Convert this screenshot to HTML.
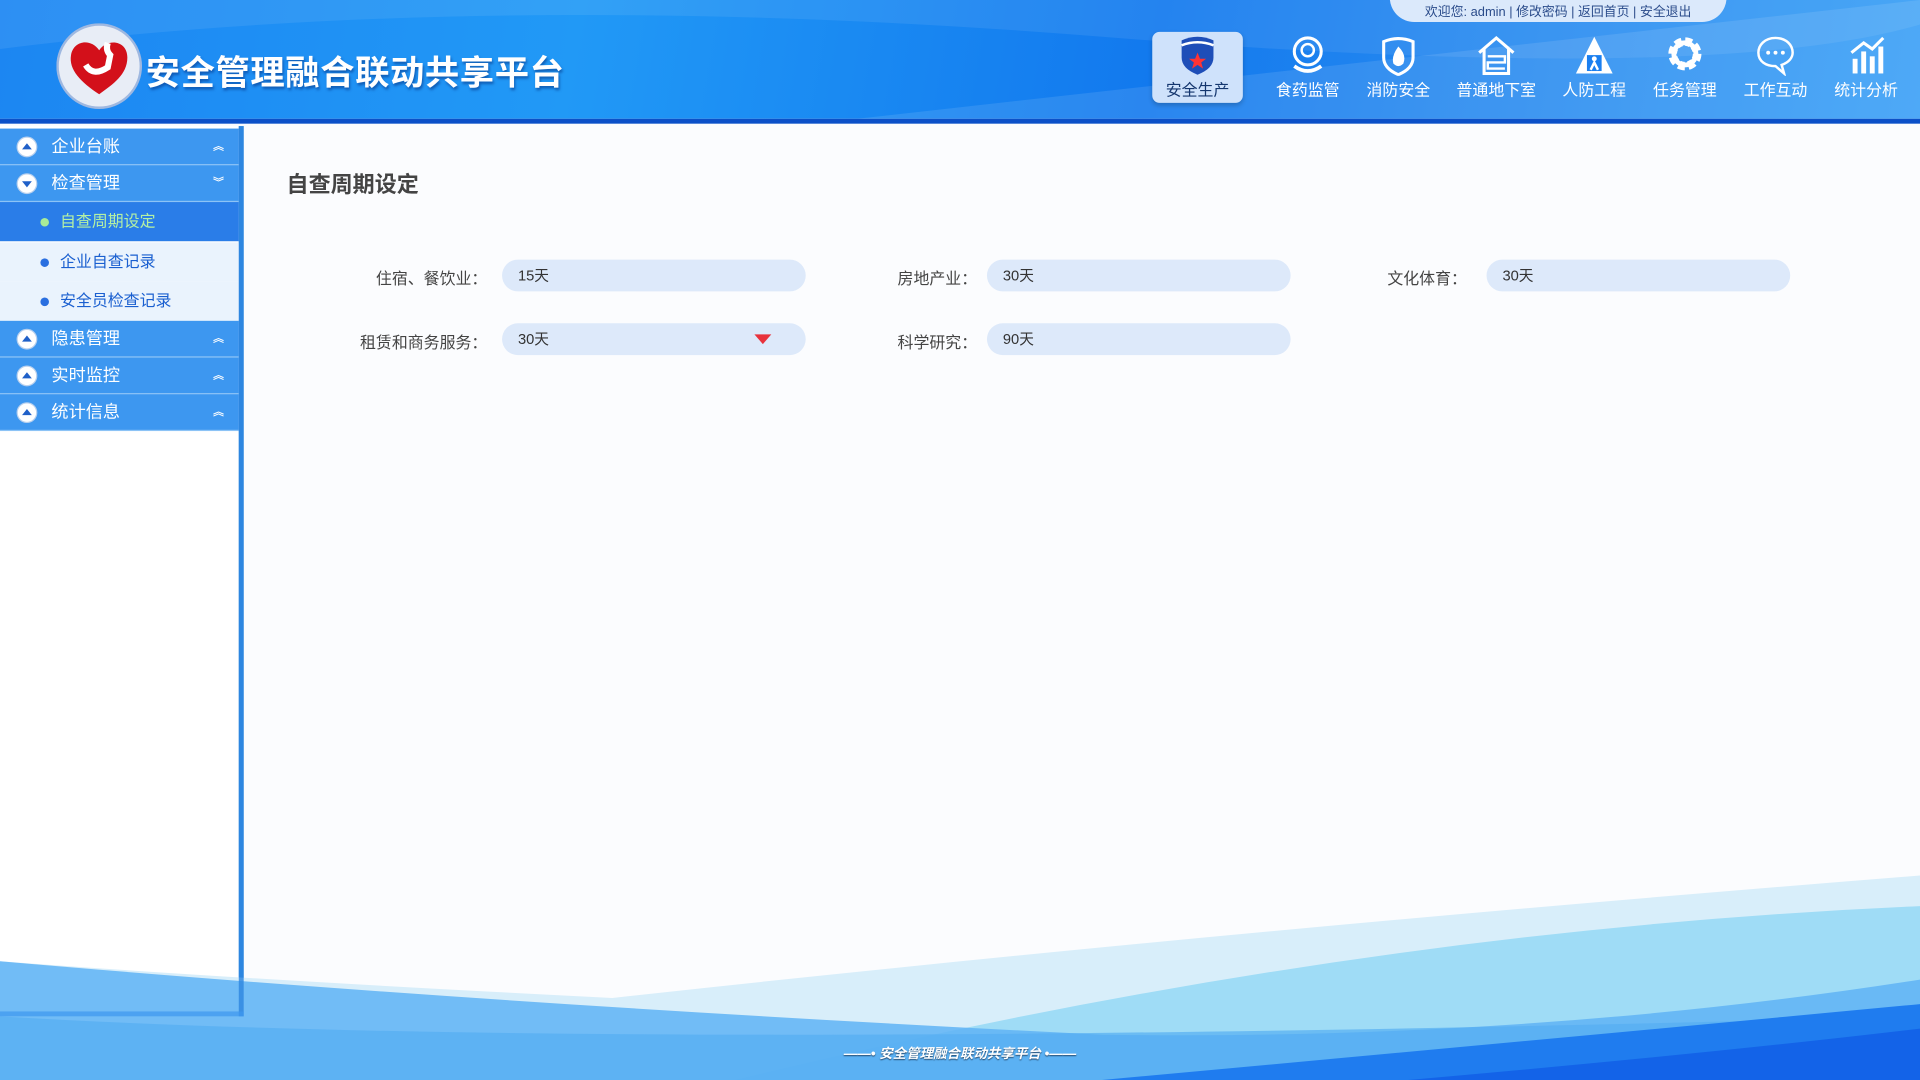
<!DOCTYPE html>
<html><head><meta charset="utf-8"><style>
html,body{margin:0;padding:0;width:1920px;height:1080px;overflow:hidden;background:#fff}
#w{position:absolute;left:0;top:0;width:1568px;height:882px;transform:scale(1.22449);transform-origin:0 0;overflow:hidden;font-family:"Liberation Sans","Noto Sans CJK SC",sans-serif;background:#fbfcfe}
.hdr{position:absolute;left:0;top:0;width:1568px;height:97px;background:linear-gradient(100deg,#1c86f2 0%,#2199f6 30%,#1279ee 60%,#2a8cf0 80%,#3aa0f6 100%);border-bottom:4px solid #0b50c8;overflow:hidden}
.title{position:absolute;left:119px;top:38px;color:#fff;font-size:28px;font-weight:bold;letter-spacing:0.5px;text-shadow:1px 2px 2px rgba(0,40,120,.5)}
.tab{position:absolute;left:1135px;top:-2px;width:275px;height:20px;background:#dbe9fb;border-radius:0 0 40px 40px;font-size:10.5px;color:#2a4b8a;text-align:center;line-height:24px}
.nav{position:absolute;top:26px;width:74px;height:58px;text-align:center;color:#fff;font-size:13px}
.nav svg{display:block;margin:2px auto 0}
.nav span{position:absolute;left:0;right:0;top:37px}
.act{background:#cfe2fb;border-radius:6px;color:#14366e;box-shadow:0 2px 4px rgba(0,0,0,.2)}
.side{position:absolute;left:0;top:103px;width:195px;height:727px;background:#fff;border-right:4px solid #2d86e0}
.mh{position:absolute;left:0;width:195px;height:29px;background:#3d97f0;color:#fff;font-size:14px;line-height:29px;border-bottom:1px solid #8cc3f6}
.mh svg{position:absolute;left:13px;top:6px}
.mh b{position:absolute;left:42px;font-weight:normal}
.mh em{position:absolute;right:12px;top:0;font-style:normal;font-size:9px;font-weight:bold}
.sub{position:absolute;left:0;width:195px;height:32px;font-size:13px;line-height:32px;color:#1a5fd0;background:#eaf3fd}
.sub::before{content:"";position:absolute;left:33px;top:13px;width:7px;height:7px;border-radius:50%;background:#2a6fe0}
.sub.on::before{background:#a8ec98}
.sub span{position:absolute;left:49px}
.lab{position:absolute;font-size:13px;color:#444;text-align:right;width:200px}
.inp{position:absolute;width:248px;height:26px;border-radius:13px;background:#dde9fa;font-size:12px;color:#333;line-height:26px;text-indent:13px}
</style></head><body><div id="w">
<div class="hdr">
<svg width="1568" height="97" style="position:absolute;left:0;top:0"><path d="M0 40 Q400 -10 900 30 T1568 20 V0 H0Z" fill="rgba(255,255,255,.08)"/><path d="M700 97 L1568 0 V97Z" fill="rgba(255,255,255,.1)"/></svg>
<svg width="70" height="70" style="position:absolute;left:46px;top:19px"><circle cx="35" cy="35" r="34" fill="#e8edf6" stroke="#9fb8e0" stroke-width="2"/><path d="M35 58 C20 48 10 38 12 26 C14 14 28 12 35 22 C42 12 58 14 58 28 C58 42 46 50 35 58Z" fill="#d3101a"/><path d="M24 34 Q30 44 42 36 L44 26 Q40 22 42 16" stroke="#fff" stroke-width="5" fill="none"/></svg>
<div class="title">安全管理融合联动共享平台</div>
<div class="tab">欢迎您: admin | 修改密码 | 返回首页 | 安全退出</div>
<div class="nav act" style="left:941px"><svg width="32" height="34" viewBox="0 0 32 34"><path d="M3 5 Q16 -1 29 5 V19 Q29 28 16 33 Q3 28 3 19Z" fill="#1e4eb8"/><path d="M3 9 Q16 4 29 9" stroke="#fff" stroke-width="2" fill="none"/><polygon points="16,15 18,20 23,20 19,23 20.5,28 16,25 11.5,28 13,23 9,20 14,20" fill="#f33"/></svg><span>安全生产</span></div>
<div class="nav" style="left:1031px"><svg width="32" height="34"><circle cx="16" cy="14" r="11" fill="none" stroke="#fff" stroke-width="2.5"/><circle cx="16" cy="13" r="5" fill="none" stroke="#fff" stroke-width="2"/><path d="M5 26 Q16 34 27 26" stroke="#fff" stroke-width="3" fill="none"/></svg><span>食药监管</span></div>
<div class="nav" style="left:1105px"><svg width="32" height="34"><path d="M4 6 Q16 1 28 6 V19 Q28 28 16 33 Q4 28 4 19Z" fill="none" stroke="#fff" stroke-width="2.5"/><path d="M16 10 Q23 17 20 24 Q16 28 12 24 Q10 18 16 10Z" fill="#fff"/></svg><span>消防安全</span></div>
<div class="nav" style="left:1185px"><svg width="34" height="34"><path d="M3 15 L17 3 L31 15 M7 12 V32 H27 V12" fill="none" stroke="#fff" stroke-width="2.5"/><path d="M10 18 H24 V23 H10 V28 H24" fill="none" stroke="#fff" stroke-width="2"/></svg><span>普通地下室</span></div>
<div class="nav" style="left:1265px"><svg width="34" height="34"><path d="M17 2 L32 32 H2Z" fill="#fff"/><rect x="11" y="17" width="12" height="13" fill="#1a7ff0"/><circle cx="17" cy="20" r="2" fill="#fff"/><path d="M14 29 L17 23 L20 29" stroke="#fff" stroke-width="2" fill="none"/></svg><span>人防工程</span></div>
<div class="nav" style="left:1339px"><svg width="34" height="34"><circle cx="17" cy="16" r="10" fill="none" stroke="#fff" stroke-width="7" stroke-dasharray="5 2.85"/><circle cx="17" cy="16" r="9" fill="none" stroke="#fff" stroke-width="4"/></svg><span>任务管理</span></div>
<div class="nav" style="left:1413px"><svg width="34" height="34"><path d="M17 3 C8 3 3 9 3 15 C3 22 9 26 17 26 L24 32 L22 25 C28 23 31 19 31 15 C31 9 26 3 17 3Z" fill="none" stroke="#fff" stroke-width="2"/><circle cx="11" cy="15" r="1.6" fill="#fff"/><circle cx="17" cy="15" r="1.6" fill="#fff"/><circle cx="23" cy="15" r="1.6" fill="#fff"/></svg><span>工作互动</span></div>
<div class="nav" style="left:1487px"><svg width="34" height="34"><rect x="6" y="20" width="4" height="12" fill="#fff"/><rect x="13" y="14" width="4" height="18" fill="#fff"/><rect x="20" y="18" width="4" height="14" fill="#fff"/><rect x="27" y="10" width="4" height="22" fill="#fff"/><path d="M5 15 L15 7 L22 12 L31 3" stroke="#fff" stroke-width="2.5" fill="none"/></svg><span>统计分析</span></div>
</div>
<div class="side">
<div class="mh" style="top:2px"><svg width="18" height="18"><circle cx="9" cy="9" r="8" fill="#fff" stroke="#b8d0ee"/><path d="M5 11 L9 6 L13 11Z" fill="#2060c8"/></svg><b>企业台账</b><em>︽</em></div>
<div class="mh" style="top:32px"><svg width="18" height="18"><circle cx="9" cy="9" r="8" fill="#fff" stroke="#b8d0ee"/><path d="M5 7 L9 12 L13 7Z" fill="#2060c8"/></svg><b>检查管理</b><em>︾</em></div>
<div class="sub on" style="top:62px;background:#2a7de8;color:#b4f0a4"><span>自查周期设定</span></div>
<div class="sub" style="top:95px"><span>企业自查记录</span></div>
<div class="sub" style="top:127px"><span>安全员检查记录</span></div>
<div class="mh" style="top:159px"><svg width="18" height="18"><circle cx="9" cy="9" r="8" fill="#fff" stroke="#b8d0ee"/><path d="M5 11 L9 6 L13 11Z" fill="#2060c8"/></svg><b>隐患管理</b><em>︽</em></div>
<div class="mh" style="top:189px"><svg width="18" height="18"><circle cx="9" cy="9" r="8" fill="#fff" stroke="#b8d0ee"/><path d="M5 11 L9 6 L13 11Z" fill="#2060c8"/></svg><b>实时监控</b><em>︽</em></div>
<div class="mh" style="top:219px"><svg width="18" height="18"><circle cx="9" cy="9" r="8" fill="#fff" stroke="#b8d0ee"/><path d="M5 11 L9 6 L13 11Z" fill="#2060c8"/></svg><b>统计信息</b><em>︽</em></div>
</div>
<svg width="1568" height="882" style="position:absolute;left:0;top:0"><path d="M0 785 Q200 800 500 815 Q1000 760 1568 715 V882 H0Z" fill="#d4ecfa" opacity=".9"/><path d="M600 882 Q1100 760 1568 740 V882Z" fill="#9fdcf6"/><path d="M0 785 Q400 820 900 845 Q1250 850 1568 800 V882 H0Z" fill="#5fb3f4" opacity=".85"/><path d="M0 830 Q500 860 1568 830 V882 H0Z" fill="#56aef2" opacity=".7"/><path d="M900 882 Q1250 850 1568 820 V882Z" fill="#1f7cef"/><path d="M1150 882 Q1400 860 1568 840 V882Z" fill="#1363e8"/><rect x="195" y="103" width="4" height="727" fill="#2d86e0" opacity=".8"/><rect x="0" y="826" width="199" height="4" fill="#3d97f0" opacity=".7"/></svg>
<div style="position:absolute;left:234px;top:137px;font-size:18px;color:#444;font-weight:bold">自查周期设定</div>
<div class="lab" style="left:198px;top:217px">住宿、餐饮业：</div><div class="inp" style="left:410px;top:212px">15天</div>
<div class="lab" style="left:598px;top:217px">房地产业：</div><div class="inp" style="left:806px;top:212px">30天</div>
<div class="lab" style="left:998px;top:217px">文化体育：</div><div class="inp" style="left:1214px;top:212px">30天</div>
<div class="lab" style="left:198px;top:269px">租赁和商务服务：</div><div class="inp" style="left:410px;top:264px">30天<svg width="14" height="8" style="position:absolute;left:206px;top:9px"><path d="M0 0 H14 L7 8Z" fill="#e8323c"/></svg></div>
<div class="lab" style="left:598px;top:269px">科学研究：</div><div class="inp" style="left:806px;top:264px">90天</div>
<div style="position:absolute;left:0;width:1568px;top:852px;text-align:center;font-size:11px;color:#fff;font-style:italic;font-weight:bold;text-shadow:0 1px 1px #246">——• 安全管理融合联动共享平台 •——</div>
</div></body></html>
